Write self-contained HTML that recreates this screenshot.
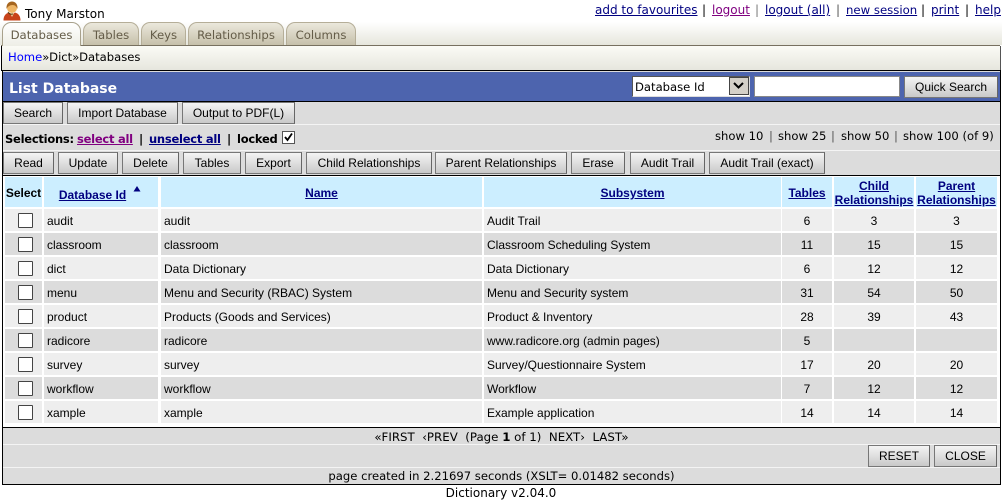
<!DOCTYPE html>
<html><head><meta charset="utf-8"><title>List Database</title>
<style>
html,body{margin:0;padding:0;background:#fff;width:1002px;height:503px;overflow:hidden}
body{position:relative;font-family:"DejaVu Sans",sans-serif;font-size:12px;color:#000}
.a{position:absolute;white-space:nowrap}
.v{font-family:"DejaVu Sans",sans-serif;font-size:12px}
.sel{font:bold 11.5px/15px "DejaVu Sans",sans-serif;letter-spacing:-.25px;top:132px}
a{color:#000080;text-decoration:underline}
.tab{position:absolute;top:22px;height:23px;box-sizing:border-box;border:1px solid #b5ae98;border-bottom:0;border-radius:9px 9px 0 0;background:linear-gradient(#ebe8dc,#c6c0aa);color:#645c48;font:11.7px/24px "DejaVu Sans",sans-serif;text-align:center}
.btn{position:absolute;box-sizing:border-box;border:1px solid #777;border-right-color:#666;background:linear-gradient(#f4f4f4,#c9c9c9);font:12px/21px "Liberation Sans",sans-serif;text-align:center;color:#000}
.h{position:absolute;background:#cceeff;font:bold 12px/14px "Liberation Sans",sans-serif;text-align:center;color:#000080;height:30px;top:177px;box-sizing:border-box}
.h a{color:#000080}
.r{position:absolute;left:0;width:1002px;height:22px}
.r div{position:absolute;top:0;height:22px;overflow:hidden;white-space:nowrap;font:12px/25px "Liberation Sans",sans-serif;box-sizing:border-box;padding-left:3px}
.o div{background:#eeeeee}
.e div{background:#dcdcdc}
.r .s{left:5px;width:37px}
.r .d{left:44px;width:114px}
.r .m{left:161px;width:321px}
.r .u{left:484px;width:297px}
.r .t{left:782px;width:50px;text-align:center;padding:0}
.r .k{left:834px;width:80px;text-align:center;padding:0}
.r .p{left:916px;width:81px;text-align:center;padding:0}
.r .b{left:18px;top:4px;width:15px;height:15px;background:#fff;border:1px solid #444;border-radius:1px;padding:0}
</style></head><body>

<svg class="a" style="left:3px;top:1px" width="18" height="20" viewBox="0 0 18 20">
<path d="M0.500 19.500c0-4.500 2-7 5.500-8l3 2 3-2c3.500 1 5.500 3.500 5.500 8z" fill="#c8431a"/>
<path d="M7 12l2 4 2-4z" fill="#f3d9a6"/>
<circle cx="9" cy="7" r="5" fill="#eeb565"/>
<path d="M3.500 8c-.5-5 2.500-7.500 5.500-7.500s6 2.500 5.500 7.500c-1-2.500-2.500-4-5-4S4.500 5.500 3.500 8z" fill="#a5651f"/>
<path d="M5 11c1 2 3 2.500 5 2" fill="none" stroke="#5a3a10" stroke-width="1"/>
</svg>
<div class="a v" style="left:25px;top:7px;line-height:15px">Tony Marston</div>

<div class="a v" style="left:595px;top:3px;line-height:15px"><a href="#">add to favourites</a></div>
<div class="a v" style="left:702px;top:3px;line-height:15px">|</div>
<div class="a v" style="left:712px;top:3px;line-height:15px"><a href="#" style="color:#800080">logout</a></div>
<div class="a v" style="left:755px;top:3px;line-height:15px;color:#777">|</div>
<div class="a v" style="left:765px;top:3px;line-height:15px"><a href="#">logout (all)</a></div>
<div class="a v" style="left:836px;top:3px;line-height:15px;color:#555">|</div>
<div class="a v" style="left:846px;top:3px;line-height:15px;font-size:11.7px"><a href="#">new session</a></div>
<div class="a v" style="left:921px;top:3px;line-height:15px">|</div>
<div class="a v" style="left:931px;top:3px;line-height:15px"><a href="#">print</a></div>
<div class="a v" style="left:965px;top:3px;line-height:15px">|</div>
<div class="a v" style="left:975px;top:3px;line-height:15px"><a href="#">help</a></div>

<div class="a" style="left:0;top:22px;width:1002px;height:23px;background:linear-gradient(#ffffff,#e6e6dc)"></div>
<div class="a" style="left:1px;top:45px;width:999px;height:1px;background:#77705f"></div>
<div class="tab" style="left:83px;width:56px">Tables</div>
<div class="tab" style="left:141px;width:45px">Keys</div>
<div class="tab" style="left:188px;width:96px">Relationships</div>
<div class="tab" style="left:286px;width:70px">Columns</div>
<div class="tab" style="left:2px;width:79px;height:24px;background:linear-gradient(#ffffff,#eeeee6);border-color:#a8a18c;z-index:2">Databases</div>

<div class="a" style="left:1px;top:46px;width:999px;height:24px;background:linear-gradient(#fbfbf6,#e6e6de);border-right:1px solid #555"></div>
<div class="a" style="left:1px;top:46px;width:1px;height:25px;background:#000"></div>
<div class="a v" style="left:8px;top:50px;line-height:15px;font-size:11.6px"><span style="color:#0000ff">Home</span>»Dict»Databases</div>

<div class="a" style="left:2px;top:70px;width:999px;height:415px;box-sizing:border-box;border:1px solid #000;background:#dcdcdc"></div>

<div class="a" style="left:3px;top:72px;width:997px;height:29px;background:#4d64ae;border-bottom:1px solid #000"></div>
<div class="a" style="left:9px;top:79px;color:#fff;font:bold 14px/20px 'DejaVu Sans',sans-serif">List Database</div>

<div class="a" style="left:632px;top:76px;width:118px;height:21px;box-sizing:border-box;background:#fff;border:1px solid;border-color:#555 #ddd #ddd #555;font:11.6px/20px 'DejaVu Sans',sans-serif;padding-left:2px">Database Id</div>
<div class="a" style="left:729px;top:77px;width:20px;height:18px;box-sizing:border-box;background:#d4d0c8;border:1px solid #444"></div>
<svg class="a" style="left:733px;top:82px" width="11" height="8"><path d="M1 1l4.500 4.500L10 1" fill="none" stroke="#000" stroke-width="2"/></svg>
<div class="a" style="left:754px;top:76px;width:146px;height:21px;box-sizing:border-box;background:#fff;border:1px solid #888"></div>
<div class="btn" style="left:904px;top:76px;width:94px;height:22px">Quick Search</div>

<div class="btn" style="left:3px;top:102px;width:60px;height:22px">Search</div>
<div class="btn" style="left:67px;top:102px;width:111px;height:22px">Import Database</div>
<div class="btn" style="left:182px;top:102px;width:113px;height:22px">Output to PDF(L)</div>
<div class="a" style="left:3px;top:124px;width:997px;height:1px;background:#f4f4f4"></div>

<div class="a sel" style="left:5px">Selections:</div>
<div class="a sel" style="left:77px"><a href="#" style="color:#800080">select all</a></div>
<div class="a sel" style="left:139px">|</div>
<div class="a sel" style="left:149px"><a href="#">unselect all</a></div>
<div class="a sel" style="left:227px">|</div>
<div class="a sel" style="left:237px">locked</div>
<div class="a" style="left:282px;top:131px;width:13px;height:13px;box-sizing:border-box;background:#fff;border:1px solid #555"></div>
<svg class="a" style="left:282px;top:131px" width="13" height="13"><path d="M3 6l2.500 3L10 2.500" fill="none" stroke="#000" stroke-width="1.800"/></svg>

<div class="a v" style="left:715px;top:129px;line-height:15px;font-size:11.6px">show 10</div>
<div class="a v" style="left:769px;top:129px;line-height:15px;font-size:11.6px;color:#555">|</div>
<div class="a v" style="left:778px;top:129px;line-height:15px;font-size:11.6px">show 25</div>
<div class="a v" style="left:831px;top:129px;line-height:15px;font-size:11.6px;color:#555">|</div>
<div class="a v" style="left:841px;top:129px;line-height:15px;font-size:11.6px">show 50</div>
<div class="a v" style="left:894px;top:129px;line-height:15px;font-size:11.6px;color:#555">|</div>
<div class="a v" style="left:903px;top:129px;line-height:15px;font-size:11.6px">show 100 (of 9)</div>
<div class="a" style="left:3px;top:150px;width:997px;height:1px;background:#f4f4f4"></div>

<div class="btn" style="left:3px;top:152px;width:51px;height:22px">Read</div>
<div class="btn" style="left:58px;top:152px;width:60px;height:22px">Update</div>
<div class="btn" style="left:122px;top:152px;width:57px;height:22px">Delete</div>
<div class="btn" style="left:183px;top:152px;width:58px;height:22px">Tables</div>
<div class="btn" style="left:245px;top:152px;width:57px;height:22px">Export</div>
<div class="btn" style="left:306px;top:152px;width:126px;height:22px">Child Relationships</div>
<div class="btn" style="left:435px;top:152px;width:132px;height:22px">Parent Relationships</div>
<div class="btn" style="left:571px;top:152px;width:54px;height:22px">Erase</div>
<div class="btn" style="left:630px;top:152px;width:75px;height:22px">Audit Trail</div>
<div class="btn" style="left:709px;top:152px;width:116px;height:22px">Audit Trail (exact)</div>

<div class="a" style="left:3px;top:175px;width:997px;height:251px;background:#fff;border-top:1px solid #000;border-bottom:1px solid #000"></div>

<div class="h" style="left:5px;width:37px;color:#000;padding-top:9px">Select</div>
<div class="h" style="left:44px;width:114px;padding:11px 17px 0 0"><a href="#">Database Id</a></div>
<svg class="a" style="left:133px;top:186px" width="8" height="6"><path d="M4 0L7.500 5.500H.5z" fill="#000080"/></svg>
<div class="h" style="left:161px;width:321px;padding-top:9px"><a href="#">Name</a></div>
<div class="h" style="left:484px;width:297px;padding-top:9px"><a href="#">Subsystem</a></div>
<div class="h" style="left:782px;width:50px;padding-top:9px"><a href="#">Tables</a></div>
<div class="h" style="left:834px;width:80px;padding-top:2px"><a href="#">Child<br>Relationships</a></div>
<div class="h" style="left:916px;width:81px;padding-top:2px"><a href="#">Parent<br>Relationships</a></div>

<div class="r o" style="top:209px"><div class="s"></div><div class="b"></div><div class="d">audit</div><div class="m">audit</div><div class="u">Audit Trail</div><div class="t">6</div><div class="k">3</div><div class="p">3</div></div>
<div class="r e" style="top:233px"><div class="s"></div><div class="b"></div><div class="d">classroom</div><div class="m">classroom</div><div class="u">Classroom Scheduling System</div><div class="t">11</div><div class="k">15</div><div class="p">15</div></div>
<div class="r o" style="top:257px"><div class="s"></div><div class="b"></div><div class="d">dict</div><div class="m">Data Dictionary</div><div class="u">Data Dictionary</div><div class="t">6</div><div class="k">12</div><div class="p">12</div></div>
<div class="r e" style="top:281px"><div class="s"></div><div class="b"></div><div class="d">menu</div><div class="m">Menu and Security (RBAC) System</div><div class="u">Menu and Security system</div><div class="t">31</div><div class="k">54</div><div class="p">50</div></div>
<div class="r o" style="top:305px"><div class="s"></div><div class="b"></div><div class="d">product</div><div class="m">Products (Goods and Services)</div><div class="u">Product &amp; Inventory</div><div class="t">28</div><div class="k">39</div><div class="p">43</div></div>
<div class="r e" style="top:329px"><div class="s"></div><div class="b"></div><div class="d">radicore</div><div class="m">radicore</div><div class="u">www.radicore.org (admin pages)</div><div class="t">5</div><div class="k"></div><div class="p"></div></div>
<div class="r o" style="top:353px"><div class="s"></div><div class="b"></div><div class="d">survey</div><div class="m">survey</div><div class="u">Survey/Questionnaire System</div><div class="t">17</div><div class="k">20</div><div class="p">20</div></div>
<div class="r e" style="top:377px"><div class="s"></div><div class="b"></div><div class="d">workflow</div><div class="m">workflow</div><div class="u">Workflow</div><div class="t">7</div><div class="k">12</div><div class="p">12</div></div>
<div class="r o" style="top:401px"><div class="s"></div><div class="b"></div><div class="d">xample</div><div class="m">xample</div><div class="u">Example application</div><div class="t">14</div><div class="k">14</div><div class="p">14</div></div>

<div class="a v" style="left:3px;width:997px;top:430px;line-height:15px;text-align:center;font-size:11.8px">«FIRST &nbsp;‹PREV &nbsp;(Page <b>1</b> of 1) &nbsp;NEXT› &nbsp;LAST»</div>
<div class="a" style="left:3px;top:444px;width:997px;height:1px;background:#f4f4f4"></div>
<div class="btn" style="left:868px;top:445px;width:62px;height:22px">RESET</div>
<div class="btn" style="left:934px;top:445px;width:63px;height:22px">CLOSE</div>
<div class="a" style="left:3px;top:467px;width:997px;height:1px;background:#f4f4f4"></div>
<div class="a v" style="left:3px;width:997px;top:469px;line-height:15px;text-align:center;font-size:11.6px">page created in 2.21697 seconds (XSLT= 0.01482 seconds)</div>
<div class="a v" style="left:0;width:1002px;top:486px;line-height:15px;text-align:center">Dictionary v2.04.0</div>
</body></html>
